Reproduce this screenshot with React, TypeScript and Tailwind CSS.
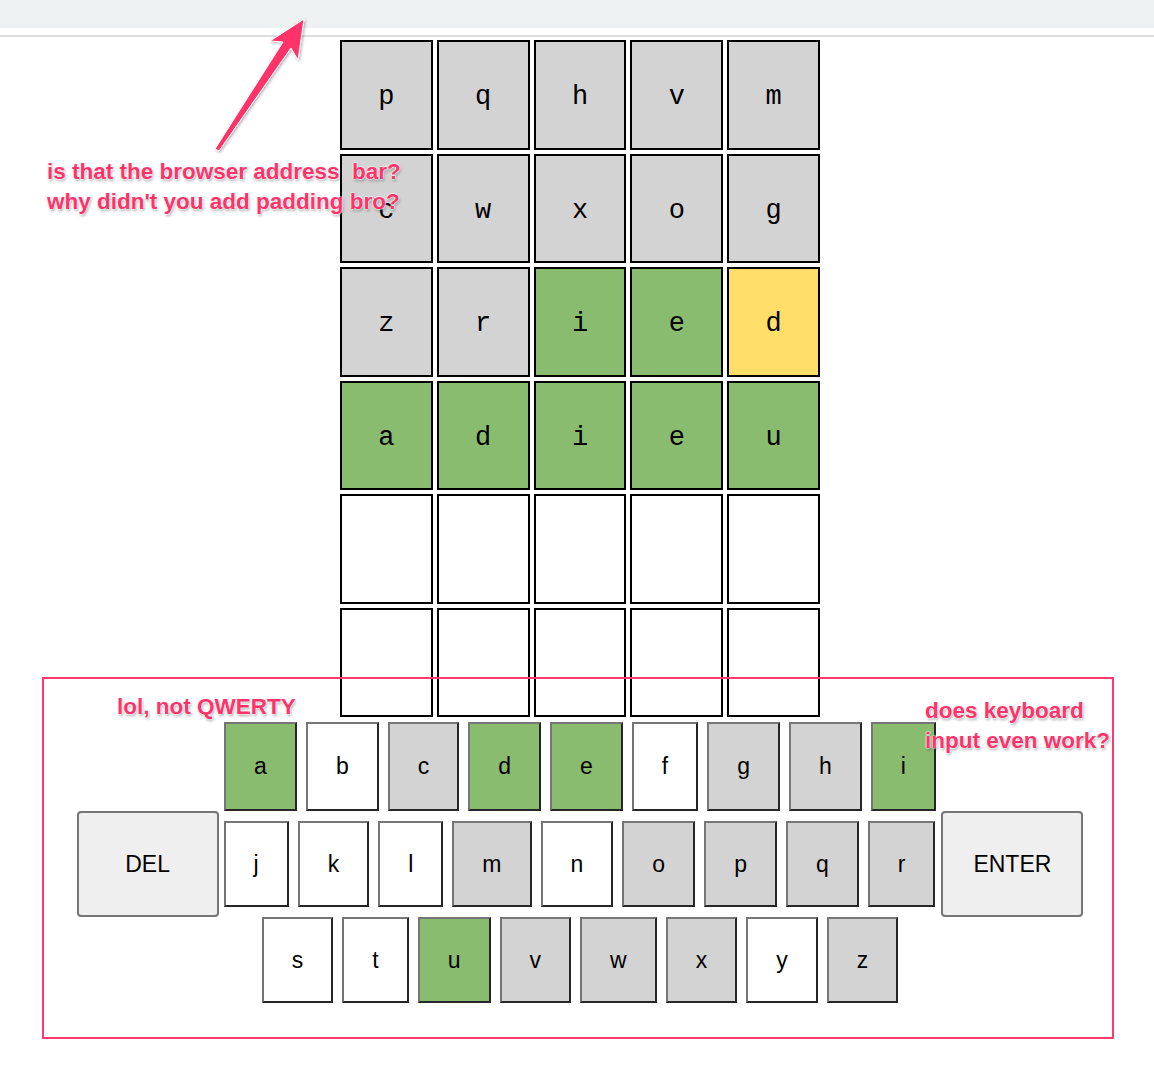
import React from 'react';

type Mark = 'grey' | 'green' | 'yellow' | 'empty' | 'none';

const tileColor: Record<Mark, string> = {
  grey: 'bg-[#d3d3d3]',
  green: 'bg-[#89bc6f]',
  yellow: 'bg-[#ffdf6a]',
  empty: 'bg-white',
  none: 'bg-white',
};

const board: [string, Mark][][] = [
  [['p', 'grey'], ['q', 'grey'], ['h', 'grey'], ['v', 'grey'], ['m', 'grey']],
  [['c', 'grey'], ['w', 'grey'], ['x', 'grey'], ['o', 'grey'], ['g', 'grey']],
  [['z', 'grey'], ['r', 'grey'], ['i', 'green'], ['e', 'green'], ['d', 'yellow']],
  [['a', 'green'], ['d', 'green'], ['i', 'green'], ['e', 'green'], ['u', 'green']],
  [['', 'empty'], ['', 'empty'], ['', 'empty'], ['', 'empty'], ['', 'empty']],
  [['', 'empty'], ['', 'empty'], ['', 'empty'], ['', 'empty'], ['', 'empty']],
];

const keyState: Record<string, Mark> = {
  a: 'green', b: 'none', c: 'grey', d: 'green', e: 'green', f: 'none', g: 'grey', h: 'grey', i: 'green',
  j: 'none', k: 'none', l: 'none', m: 'grey', n: 'none', o: 'grey', p: 'grey', q: 'grey', r: 'grey',
  s: 'none', t: 'none', u: 'green', v: 'grey', w: 'grey', x: 'grey', y: 'none', z: 'grey',
};

const Key: React.FC<{ letter: string; tall?: boolean }> = ({ letter, tall }) => (
  <button
    className={`${tall ? 'h-[89px]' : 'h-[86px]'} px-[28px] border-2 border-t-[#767676] border-l-[#767676] border-b-[#262626] border-r-[#262626] text-[23px] text-black leading-none ${tileColor[keyState[letter]]}`}
  >
    {letter}
  </button>
);

const WideKey: React.FC<{ label: string }> = ({ label }) => (
  <button className="w-[142px] h-[106px] rounded-[4px] border-2 border-[#767676] bg-[#efefef] text-[23px] text-black leading-none">
    {label}
  </button>
);

const Note: React.FC<{ children: React.ReactNode; className: string }> = ({ children, className }) => (
  <div
    className={`absolute font-bold text-[22.5px] leading-[30px] text-[#ff3369] whitespace-pre [text-shadow:0_0_2px_#fff,0_0_2px_#fff,0_0_1px_#fff,1px_2px_3px_rgba(0,0,0,0.35)] ${className}`}
  >
    {children}
  </div>
);

export default function App() {
  return (
    <div className="relative min-h-[1068px] bg-white font-['Liberation_Sans',Arial,sans-serif]">
      {/* fake browser chrome */}
      <div className="h-[28px] bg-[#eef1f2]" />
      <div className="h-[7px]" />
      <div className="h-[2px] bg-[#dcdcdc]" />

      <div className="flex flex-col items-center pl-[6px] pt-[3px]">
        {/* board */}
        <div className="grid grid-cols-5 gap-1 w-[480px]">
          {board.flat().map(([ch, mark], i) => (
            <div
              key={i}
              className={`h-[109.5px] pt-[5px] border-2 border-black flex items-center justify-center text-[27px] text-black font-['Liberation_Mono','Courier_New',monospace] ${tileColor[mark]}`}
            >
              {ch}
            </div>
          ))}
        </div>

        {/* keyboard */}
        <div className="mt-[5px] flex flex-col items-center">
          <div className="flex gap-[9px]">
            {'abcdefghi'.split('').map((l) => (
              <Key key={l} letter={l} tall />
            ))}
          </div>
          <div className="flex items-center h-[106px]">
            <WideKey label="DEL" />
            <div className="flex gap-[9px] ml-[5px] mr-[6px]">
              {'jklmnopqr'.split('').map((l) => (
                <Key key={l} letter={l} />
              ))}
            </div>
            <WideKey label="ENTER" />
          </div>
          <div className="flex gap-[9px]">
            {'stuvwxyz'.split('').map((l) => (
              <Key key={l} letter={l} />
            ))}
          </div>
        </div>
      </div>

      {/* review annotations */}
      <svg className="absolute left-0 top-0 pointer-events-none" width="320" height="170">
        <defs>
          <filter id="sh" x="-20%" y="-20%" width="140%" height="140%">
            <feDropShadow dx="1" dy="1" stdDeviation="1.5" floodColor="#000" floodOpacity="0.35" />
          </filter>
        </defs>
        <polygon
          points="304,19 298,60 291,48 219,151 215,149 283,42 270,41"
          fill="#ff3369"
          stroke="#fff"
          strokeWidth="1"
          filter="url(#sh)"
        />
      </svg>
      <Note className="left-[47px] top-[157px]">
        {'is that the browser address  bar?\nwhy didn\'t you add padding bro?'}
      </Note>
      <div className="absolute left-[42px] top-[677px] w-[1072px] h-[362px] border-2 border-[#ff3a6e] pointer-events-none" />
      <Note className="left-[117px] top-[692px]">lol, not QWERTY</Note>
      <Note className="left-[925px] top-[696px] leading-[29px]">{'does keyboard\ninput even work?'}</Note>
    </div>
  );
}
